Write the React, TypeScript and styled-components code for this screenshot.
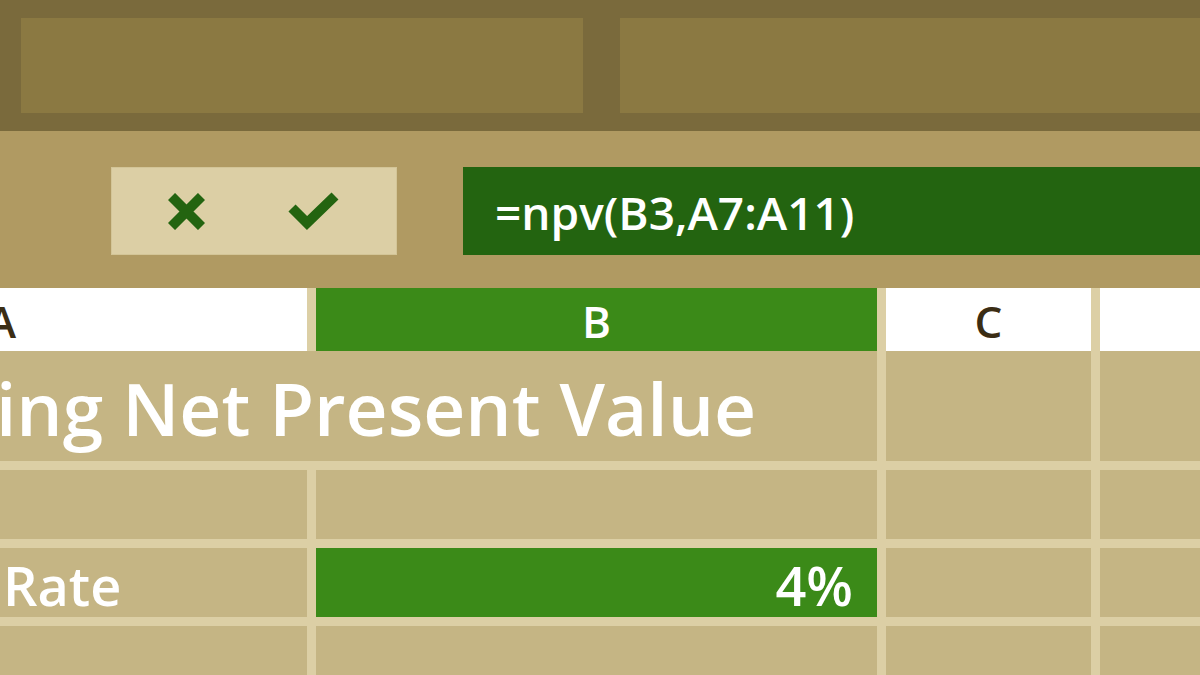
import React from "react";
import styled, { createGlobalStyle } from "styled-components";

const GlobalStyle = createGlobalStyle`
  html, body {
    margin: 0;
    padding: 0;
  }
  body {
    font-family: "Open Sans", "Noto Sans", sans-serif;
    font-weight: 600;
    overflow: hidden;
  }
`;

const Screen = styled.div`
  width: 1200px;
  height: 675px;
  overflow: hidden;
  background: #dccfa5;
`;

const RibbonBar = styled.div`
  display: flex;
  gap: 37px;
  height: 131px;
  box-sizing: border-box;
  padding: 18px 0 18px 21px;
  background: #7a6a3c;
`;

const RibbonPanel = styled.div<{ $width?: number }>`
  height: 95px;
  background: #8b7942;
  ${(p) => (p.$width ? `width: ${p.$width}px;` : "flex: 1;")}
`;

const FormulaBar = styled.div`
  display: flex;
  gap: 66px;
  height: 157px;
  box-sizing: border-box;
  padding: 36px 0 0 111px;
  background: #b09a62;
`;

const EntryButtons = styled.div`
  display: flex;
  align-items: center;
  gap: 83px;
  width: 286px;
  height: 88px;
  box-sizing: border-box;
  padding: 1px 0 0 57px;
  background: #dccfa5;
  box-shadow: inset 0 0 0 1px #d3c597;
`;

const FormulaInput = styled.div`
  flex: 1;
  display: flex;
  align-items: center;
  height: 88px;
  padding: 2px 0 0 32px;
  box-sizing: border-box;
  background: #236410;
  color: #ffffff;
  font-size: 46px;
  white-space: nowrap;
`;

const ColumnHeaders = styled.div`
  display: grid;
  grid-template-columns: 307px 561px 205px 205px;
  column-gap: 9px;
  height: 63px;
`;

const ColumnHeader = styled.div<{ $selected?: boolean; $shift?: number }>`
  display: flex;
  align-items: center;
  justify-content: ${(p) => (p.$shift !== undefined ? "flex-start" : "center")};
  background: ${(p) => (p.$selected ? "#3b8a18" : "#ffffff")};
  color: ${(p) => (p.$selected ? "#ffffff" : "#3b2d14")};
  font-size: 44px;
  overflow: hidden;

  span {
    margin-left: ${(p) => p.$shift ?? 0}px;
    padding-top: 3px;
  }
`;

const Rows = styled.div`
  display: grid;
  grid-template-columns: 307px 561px 205px 205px;
  grid-template-rows: 110px 69px 69px 69px;
  gap: 9px;
`;

const Cell = styled.div<{
  $span?: number;
  $align?: "left" | "right";
  $filled?: boolean;
}>`
  display: flex;
  align-items: center;
  justify-content: ${(p) => (p.$align === "right" ? "flex-end" : "flex-start")};
  grid-column: span ${(p) => p.$span ?? 1};
  box-sizing: border-box;
  padding: 0 24px 0 0;
  background: ${(p) => (p.$filled ? "#3b8a18" : "#c5b584")};
  color: #ffffff;
  font-size: 54px;
  white-space: nowrap;
`;

const TitleCell = styled(Cell)`
  font-size: 73px;
  overflow: hidden;
`;

const TitleText = styled.span`
  margin-left: -4px;
  padding-top: 2px;
`;

const LabelText = styled.span`
  margin-left: 3px;
  padding-top: 4px;
`;

const ValueText = styled.span`
  padding-top: 4px;
`;

const CancelIcon = () => (
  <svg width="37" height="37" viewBox="0 0 37 37">
    <path
      d="M3.5 3.5 L33.5 33.5 M33.5 3.5 L3.5 33.5"
      stroke="#236410"
      strokeWidth="10"
      fill="none"
    />
  </svg>
);

const EnterIcon = () => (
  <svg width="52" height="40" viewBox="0 0 52 40">
    <polyline
      points="4,16 19,31 47,4"
      stroke="#236410"
      strokeWidth="10"
      strokeLinejoin="miter"
      fill="none"
    />
  </svg>
);

export default function App() {
  return (
    <>
      <GlobalStyle />
      <Screen>
        <RibbonBar>
          <RibbonPanel $width={562} />
          <RibbonPanel />
        </RibbonBar>

        <FormulaBar>
          <EntryButtons>
            <CancelIcon />
            <EnterIcon />
          </EntryButtons>
          <FormulaInput>=npv(B3,A7:A11)</FormulaInput>
        </FormulaBar>

        <ColumnHeaders>
          <ColumnHeader $shift={-13}>
            <span>A</span>
          </ColumnHeader>
          <ColumnHeader $selected>
            <span>B</span>
          </ColumnHeader>
          <ColumnHeader>
            <span>C</span>
          </ColumnHeader>
          <ColumnHeader />
        </ColumnHeaders>

        <Rows>
          <TitleCell $span={2}>
            <TitleText>ing Net Present Value</TitleText>
          </TitleCell>
          <Cell />
          <Cell />

          <Cell />
          <Cell />
          <Cell />
          <Cell />

          <Cell>
            <LabelText>Rate</LabelText>
          </Cell>
          <Cell $filled $align="right">
            <ValueText>4%</ValueText>
          </Cell>
          <Cell />
          <Cell />

          <Cell />
          <Cell />
          <Cell />
          <Cell />
        </Rows>
      </Screen>
    </>
  );
}
